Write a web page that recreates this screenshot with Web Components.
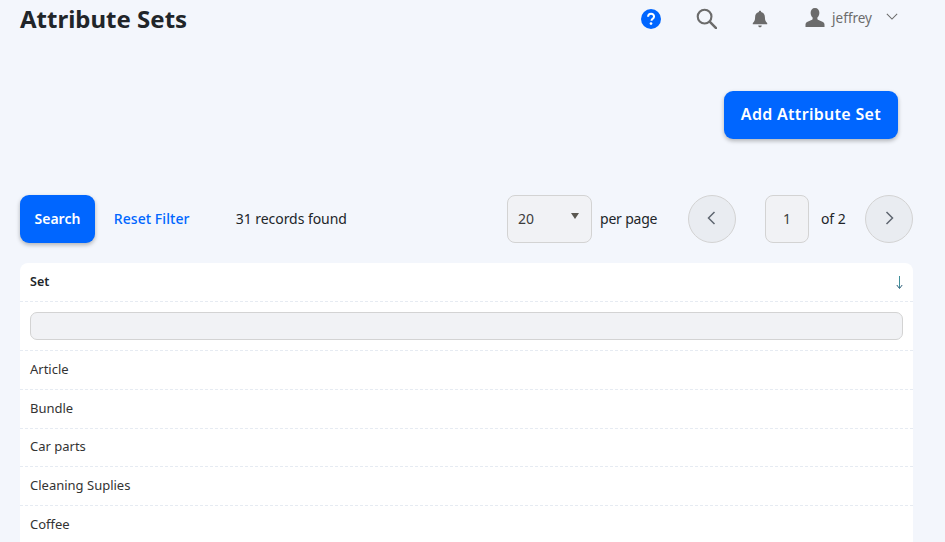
<!DOCTYPE html>
<html>
<head>
<meta charset="utf-8">
<title>Attribute Sets</title>
<style>
  html, body { margin: 0; height: 100%; overflow: hidden; background: #f3f6fc; }
  body { font-family: "Noto Sans", "Open Sans", sans-serif; color: #212529; }
</style>
</head>
<body>
<app-page></app-page>
<script>
// top bar: title on the left, icons and user on the right
class TopBar extends HTMLElement {
  constructor() {
    super();
    this.attachShadow({ mode: "open" });
    this.shadowRoot.innerHTML = `
      <style>
        :host { display: flex; align-items: center; height: 40px; padding-left: 20px; }
        h1 { margin: 0 0 2px; font-size: 24px; font-weight: 700; line-height: 38px; color: #212529; flex: 1; }
        .icons { display: flex; align-items: center; padding-bottom: 2px; }
        svg { display: block; }
        .help { width: 20px; height: 20px; margin-right: 35px; }
        .search { width: 21px; height: 21px; margin-right: 35px; margin-top: -2px; }
        .bell { width: 16px; height: 18px; margin-right: 37px; }
        .user { width: 20px; height: 19px; margin-top: -4px; margin-right: 7px; }
        .name { font-size: 13.500px; color: #6c6c6c; margin-right: 14px; margin-top: -2px; }
        .chev { width: 12px; height: 7px; margin-right: 47px; margin-top: -5px; }
      </style>
      <h1><slot></slot></h1>
      <div class="icons">
        <svg class="help" viewBox="0 0 21 21"><circle cx="10.500" cy="10.500" r="10.500" fill="#0066ff"/>
          <path d="M7.400 8.100c.1-1.900 1.400-3 3.200-3 1.800 0 3.100 1.100 3.100 2.700 0 1.200-.6 1.900-1.500 2.500-.8.500-1.100.9-1.100 1.700v.4" fill="none" stroke="#fff" stroke-width="2.100"/>
          <circle cx="10.500" cy="15.300" r="1.400" fill="#fff"/></svg>
        <svg class="search" viewBox="0 0 22 22"><circle cx="9" cy="9" r="7.200" fill="none" stroke="#6b6b6b" stroke-width="2.200"/>
          <path d="M14.300 14.300L21 21" stroke="#6b6b6b" stroke-width="2.600" stroke-linecap="round"/></svg>
        <svg class="bell" viewBox="0 0 18 20"><path d="M9 .8c.8 0 1.300.5 1.300 1.300 2.700.6 4.200 2.900 4.200 5.700 0 3.700.9 5.200 2.600 6.800v1.400H.9v-1.400c1.700-1.600 2.600-3.100 2.600-6.800 0-2.800 1.500-5.100 4.200-5.700C7.700 1.300 8.200.8 9 .8z" fill="#6b6b6b"/>
          <path d="M7 17.200h4c0 1.200-.9 2-2 2s-2-.8-2-2z" fill="#6b6b6b"/></svg>
        <svg class="user" viewBox="0 0 21 20"><path d="M10.500 0c3 0 4.600 2.200 4.600 5.100 0 2.100-.9 4-2.100 5v1.600c0 1 3 1.700 5.300 2.900 1.500.7 2.200 1.600 2.200 2.900V20H.5v-2.500c0-1.300.7-2.200 2.200-2.900 2.300-1.200 5.300-1.900 5.300-2.900v-1.600c-1.200-1-2.100-2.900-2.100-5C5.900 2.200 7.500 0 10.500 0z" fill="#6b6b6b"/></svg>
        <span class="name">jeffrey</span>
        <svg class="chev" viewBox="0 0 14 8"><path d="M1 1l6 6 6-6" fill="none" stroke="#6b6b6b" stroke-width="1.200"/></svg>
      </div>`;
  }
}

// rounded blue button
class BlueButton extends HTMLElement {
  constructor() {
    super();
    this.attachShadow({ mode: "open" });
    this.shadowRoot.innerHTML = `
      <style>
        :host { display: inline-flex; align-items: center; justify-content: center; height: 48px;
          padding: 0 var(--btn-pad, 15px) 2px; box-sizing: border-box; background: #0066ff; color: #fff;
          border-radius: 9px; font-weight: 600; font-size: var(--btn-size, 14px); letter-spacing: var(--btn-track, 0);
          box-shadow: 0 2px 4px rgba(0,0,0,.28); cursor: pointer; }
      </style>
      <slot></slot>`;
  }
}

// search / paging row above the table
class FilterBar extends HTMLElement {
  constructor() {
    super();
    this.attachShadow({ mode: "open" });
    this.shadowRoot.innerHTML = `
      <style>
        :host { display: flex; align-items: center; height: 48px; padding: 0 32px 0 20px; font-size: 14px; color: #212529; --btn-pad: 14.500px; }
        .t { padding-bottom: 2px; }
        .reset { color: #0066ff; font-weight: 500; margin-left: 19px; width: 122px; letter-spacing: .05px; }
        .count { flex: 1; letter-spacing: -.06px; }
        .select { width: 85px; height: 48px; box-sizing: border-box; border: 1px solid #d3d3d3; border-radius: 8px;
          background: #f1f2f5; display: flex; align-items: center; justify-content: space-between; padding: 0 12px 0 10px; color: #3d3d3d; }
        .select i { width: 0; height: 0; border: 4px solid transparent; border-top: 6px solid #5a5750; border-bottom: 0; margin-top: -6px; }
        .per { box-sizing: border-box; width: 88px; margin-left: 8px; letter-spacing: -.2px; }
        .round { width: 48px; height: 48px; box-sizing: border-box; border: 1px solid #d3d3d3; border-radius: 50%;
          background: #e9ecf1; display: flex; align-items: center; justify-content: center; }
        .page { width: 44px; height: 48px; box-sizing: border-box; border: 1px solid #d3d3d3; border-radius: 8px;
          background: #f1f2f5; display: flex; align-items: center; justify-content: center; margin-left: 29px; color: #3d3d3d; }
        .of { margin-left: 12px; margin-right: 20px; width: 24px; white-space: nowrap; letter-spacing: -.1px; }
        svg { width: 9px; height: 14px; margin-top: -3px; }
        .back { margin-left: -2px; }
      </style>
      <blue-button>Search</blue-button>
      <span class="reset t">Reset Filter</span>
      <span class="count t">31 records found</span>
      <div class="select"><span class="t">20</span><i></i></div>
      <span class="per t">per page</span>
      <div class="round"><svg class="back" viewBox="0 0 9 14"><path d="M7.500 1L1.500 7l6 6" fill="none" stroke="#5f6670" stroke-width="1.500"/></svg></div>
      <div class="page"><span class="t">1</span></div>
      <span class="of t">of 2</span>
      <div class="round"><svg viewBox="0 0 9 14"><path d="M1.500 1l6 6-6 6" fill="none" stroke="#5f6670" stroke-width="1.500"/></svg></div>`;
  }
}

class SetRow extends HTMLElement {
  constructor() {
    super();
    this.attachShadow({ mode: "open" });
    this.shadowRoot.innerHTML = `
      <style>
        :host { display: flex; align-items: center; height: 38.750px; box-sizing: border-box; padding: 0 10px 2px;
          border-bottom: 1px dashed #e6ebf2; font-size: 13px; color: #333; }
      </style>
      <slot></slot>`;
  }
}

class SetTable extends HTMLElement {
  constructor() {
    super();
    this.attachShadow({ mode: "open" });
    this.shadowRoot.innerHTML = `
      <style>
        :host { display: block; margin: 20px 32px 0 20px; background: #fff; border-radius: 8px 8px 0 0; }
        .head { display: flex; align-items: center; justify-content: space-between; height: 39px; box-sizing: border-box;
          padding: 0 10px 2px; border-bottom: 1px dashed #e6ebf2; font-size: 12.500px; font-weight: 600; color: #212529; }
        .arrow { width: 7px; height: 13px; margin-top: 2px; }
        .filter { height: 49px; box-sizing: border-box; padding: 10px; border-bottom: 1px dashed #e6ebf2; }
        .filter div { height: 28px; box-sizing: border-box; border: 1px solid #d3d3d3; border-radius: 7px; background: #f1f2f5; }
      </style>
      <div class="head"><span>Set</span>
        <svg class="arrow" viewBox="0 0 7 13"><path d="M3.500 0v12" stroke="#3f8f9a" stroke-width="1"/><path d="M.8 9l2.700 3.500L6.200 9" fill="none" stroke="#2f5f7a" stroke-width="1"/></svg>
      </div>
      <div class="filter"><div></div></div>
      <slot></slot>`;
  }
}

class AppPage extends HTMLElement {
  constructor() {
    super();
    this.attachShadow({ mode: "open" });
    this.shadowRoot.innerHTML = `
      <style>
        :host { display: block; }
        .actions { display: flex; justify-content: flex-end; padding: 51px 47px 56px 0; --btn-pad: 17px; --btn-size: 16px; --btn-track: .3px; }
      </style>
      <top-bar>Attribute Sets</top-bar>
      <div class="actions"><blue-button>Add Attribute Set</blue-button></div>
      <filter-bar></filter-bar>
      <set-table>
        <set-row>Article</set-row>
        <set-row>Bundle</set-row>
        <set-row>Car parts</set-row>
        <set-row>Cleaning Suplies</set-row>
        <set-row>Coffee</set-row>
      </set-table>`;
  }
}

customElements.define("top-bar", TopBar);
customElements.define("blue-button", BlueButton);
customElements.define("filter-bar", FilterBar);
customElements.define("set-row", SetRow);
customElements.define("set-table", SetTable);
customElements.define("app-page", AppPage);
</script>
</body>
</html>
